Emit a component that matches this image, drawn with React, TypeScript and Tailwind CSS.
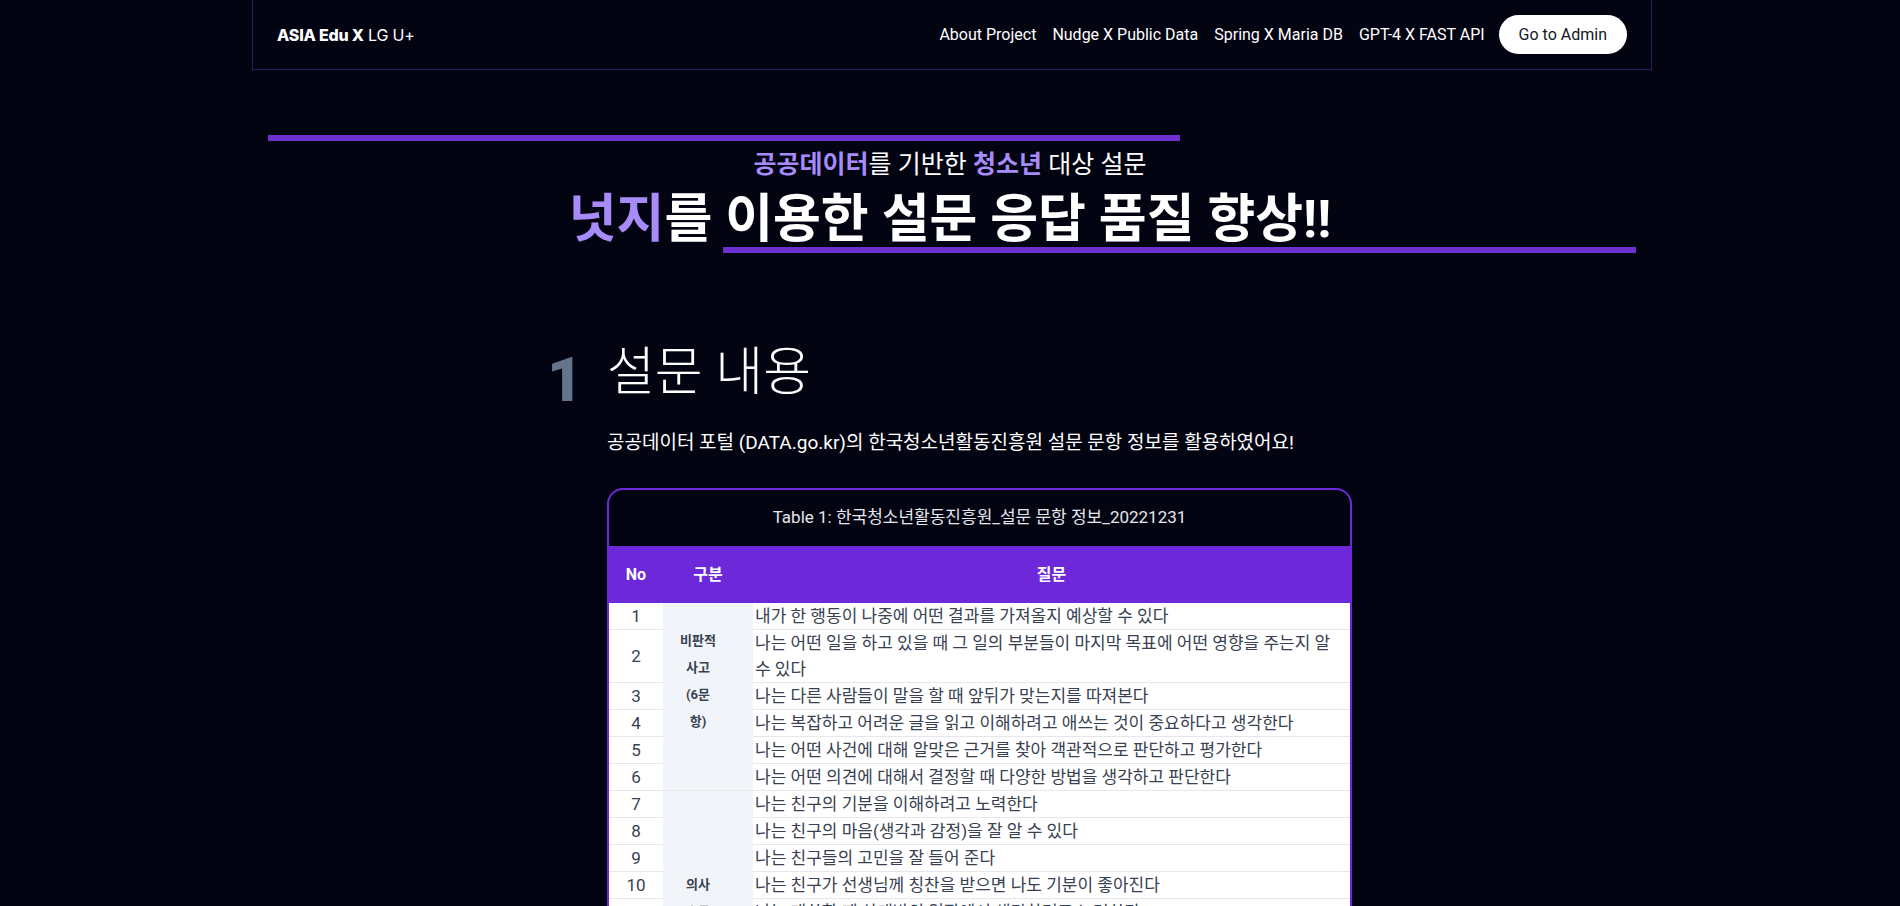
import React from "react";

const navItems = ["About Project", "Nudge X Public Data", "Spring X Maria DB", "GPT-4 X FAST API"];

const critical = [
  "내가 한 행동이 나중에 어떤 결과를 가져올지 예상할 수 있다",
  "나는 어떤 일을 하고 있을 때 그 일의 부분들이 마지막 목표에 어떤 영향을 주는지 알 수 있다",
  "나는 다른 사람들이 말을 할 때 앞뒤가 맞는지를 따져본다",
  "나는 복잡하고 어려운 글을 읽고 이해하려고 애쓰는 것이 중요하다고 생각한다",
  "나는 어떤 사건에 대해 알맞은 근거를 찾아 객관적으로 판단하고 평가한다",
  "나는 어떤 의견에 대해서 결정할 때 다양한 방법을 생각하고 판단한다",
];

const communication = [
  "나는 친구의 기분을 이해하려고 노력한다",
  "나는 친구의 마음(생각과 감정)을 잘 알 수 있다",
  "나는 친구들의 고민을 잘 들어 준다",
  "나는 친구가 선생님께 칭찬을 받으면 나도 기분이 좋아진다",
  "나는 대화할 때 상대방의 입장에서 생각하려고 노력한다",
  "나는 내 생각을 다른 사람에게 분명하게 전달할 수 있다",
  "나는 다른 사람의 말을 끝까지 듣고 내 의견을 말한다",
  "나는 친구와 의견이 다를 때 서로 이야기하며 해결한다",
];

function Header() {
  return (
    <header className="ml-[calc(50%-698px)] flex h-[70px] w-[1400px] items-center justify-between border-x border-b border-[#2b1a66] px-6">
      <p className="font-[Inter,sans-serif] text-[16px] tracking-[-0.2px] text-white">
        <span className="font-extrabold">ASIA Edu X</span> <span>LG U+</span>
      </p>
      <nav className="flex items-center gap-4 text-[16px]">
        {navItems.map((item) => (
          <a key={item} className="text-white">
            {item}
          </a>
        ))}
        <button className="ml-[-2px] h-[39px] rounded-full bg-white px-[20px] text-[16px] text-[#111827]">
          Go to Admin
        </button>
      </nav>
    </header>
  );
}

function Hero() {
  return (
    <section className="mx-auto flex w-[1400px] flex-col pt-[65px]">
      <div className="ml-[18px] h-[6px] w-[912px] bg-[#6d2fd0]" />
      <p className="mt-[8px] text-center text-[25px] leading-[32px] text-white">
        <span className="font-bold text-[#a78bfa]">공공데이터</span>를 기반한{" "}
        <span className="font-bold text-[#a78bfa]">청소년</span> 대상 설문
      </p>
      <h1 className="mt-[7px] text-center text-[52px] font-bold leading-[64px] text-white">
        <span className="text-[#a78bfa]">넛지</span>를 이용한 설문 응답 품질 향상!!
      </h1>
      <div className="mt-[-5px] mr-[14px] h-[6px] w-[913px] self-end bg-[#6d2fd0]" />
    </section>
  );
}

function CategoryCell({ label, rows, pad }: { label: string[]; rows: number; pad: string }) {
  return (
    <td rowSpan={rows} className={`bg-[#f1f4f8] align-top ${pad}`}>
      <div className="ml-[12px] w-[46px] text-center text-[13px] font-bold leading-[27px] text-[#374151]">
        {label.map((l) => (
          <div key={l}>{l}</div>
        ))}
      </div>
    </td>
  );
}

function SurveyTable() {
  return (
    <div className="mt-[31px] w-[745px] overflow-hidden rounded-[16px] border-2 border-[#6d28d9]">
      <div className="flex h-[56px] items-center justify-center text-[17px] text-[#e5e7eb]">
        Table 1: 한국청소년활동진흥원_설문 문항 정보_20221231
      </div>
      <table className="w-full border-collapse">
        <thead>
          <tr className="h-[57px] bg-[#6d28d9] text-[16px] font-bold text-white">
            <th className="w-[54px]">No</th>
            <th className="w-[90px]">구분</th>
            <th>질문</th>
          </tr>
        </thead>
        <tbody className="bg-white text-[17px] text-[#374151]">
          {critical.map((q, i) => (
            <tr key={q} className="border-b border-[#e5e7eb]">
              <td className="text-center leading-[26px]">{i + 1}</td>
              {i === 0 && <CategoryCell label={["비판적", "사고", "(6문", "항)"]} rows={6} pad="pt-[24px]" />}
              <td className="px-[2px] leading-[26px]">{q}</td>
            </tr>
          ))}
          {communication.map((q, i) => (
            <tr key={q} className="border-b border-[#e5e7eb]">
              <td className="text-center leading-[26px]">{i + 7}</td>
              {i === 0 && <CategoryCell label={["의사", "소통", "(8문", "항)"]} rows={8} pad="pt-[80px]" />}
              <td className="px-[2px] leading-[26px]">{q}</td>
            </tr>
          ))}
        </tbody>
      </table>
    </div>
  );
}

export default function App() {
  return (
    <div className="min-h-screen bg-[#030412] pb-20 font-[Roboto,Noto_Sans_CJK_KR,sans-serif] text-white">
      <Header />
      <Hero />
      <section className="mx-auto w-[1400px] pl-[303px] pt-[94px]">
        <div className="flex items-start">
          <span className="ml-[-6px] mt-[2px] w-[60px] text-[62px] font-black leading-none text-[#64748b]">1</span>
          <div>
            <h2 className="text-[52px] font-light leading-none">설문 내용</h2>
            <p className="mt-[30px] text-[19px] leading-[28px]">
              공공데이터 포털 (DATA.go.kr)의 한국청소년활동진흥원 설문 문항 정보를 활용하였어요!
            </p>
            <SurveyTable />
          </div>
        </div>
      </section>
    </div>
  );
}
